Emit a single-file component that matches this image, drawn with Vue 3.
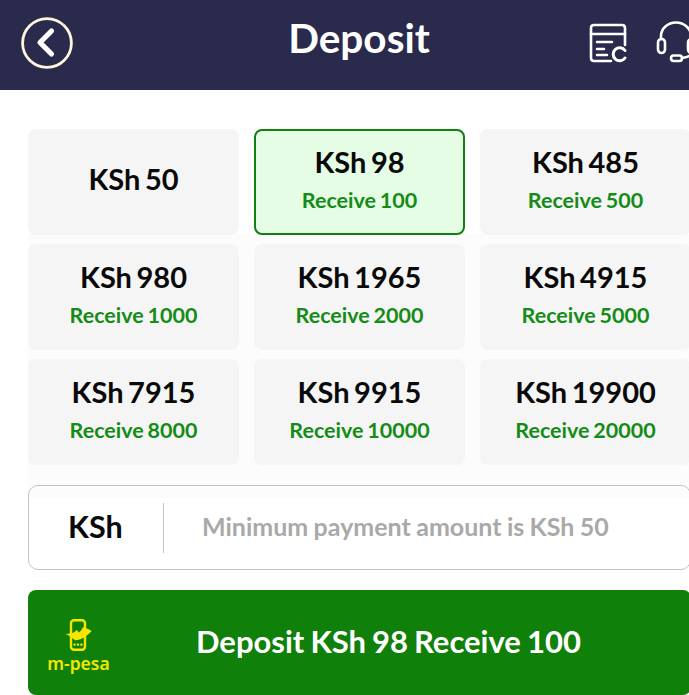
<script setup>
const options = [
  { pay: 50 },
  { pay: 98, receive: 100, active: true },
  { pay: 485, receive: 500 },
  { pay: 980, receive: 1000 },
  { pay: 1965, receive: 2000 },
  { pay: 4915, receive: 5000 },
  { pay: 7915, receive: 8000 },
  { pay: 9915, receive: 10000 },
  { pay: 19900, receive: 20000 },
]
</script>

<template>
  <div class="page">
    <header class="header">
      <svg class="back" width="52" height="52" viewBox="0 0 52 52" fill="none">
        <circle cx="26" cy="26" r="24.4" stroke="#fdf6dc" stroke-width="2.8" />
        <path d="M30.5 14 L19 25.5 L30.5 37" stroke="#fff" stroke-width="5.2" stroke-linecap="round" stroke-linejoin="round" />
      </svg>
      <h1 class="title">Deposit</h1>
      <div class="actions">
        <svg width="40" height="40" viewBox="0 0 40 40" fill="none" stroke="#fff" stroke-width="2.6" stroke-linecap="round" stroke-linejoin="round">
          <path d="M22 38 H5 Q2 38 2 35 V5 Q2 2 5 2 H33 Q36 2 36 5 V22" />
          <path d="M2 11 H36" />
          <path d="M8 19 H23 M8 26 H15 M8 32 H18" />
          <path d="M36 27.5 A6.5 6.5 0 1 0 36 35" stroke-width="3" />
        </svg>
        <svg width="40" height="44" viewBox="0 0 40 44" fill="none" stroke="#fff" stroke-width="2.6" stroke-linecap="round" stroke-linejoin="round">
          <path d="M5 18 V15 A15 13.5 0 0 1 35 15 V18" />
          <rect x="2" y="18" width="7" height="14" rx="3.5" />
          <rect x="32" y="18" width="7" height="14" rx="3.5" />
          <path d="M35 32 Q35 36 26 37" />
          <rect x="15" y="34.5" width="11" height="5.5" rx="2.7" />
        </svg>
      </div>
    </header>

    <main class="content">
      <section class="grid">
        <button v-for="o in options" :key="o.pay" class="card" :class="{ active: o.active }">
          <span class="pay">KSh {{ o.pay }}</span>
          <span v-if="o.receive" class="receive">Receive {{ o.receive }}</span>
        </button>
      </section>

      <div class="amount">
        <span class="currency">KSh</span>
        <span class="hint">Minimum payment amount is KSh 50</span>
      </div>

      <button class="submit">
        <span class="mpesa">
          <svg width="30" height="33" viewBox="0 0 30 33" fill="none">
            <rect x="8" y="1.2" width="14" height="29.6" rx="3" stroke="#f4e600" stroke-width="2.4" />
            <path d="M2 15 C7 15 11 14 13.7 11 L16 13.5 C18 12 19 10 20 8 C23 9 26 10 28.7 12 C24 17 19 21 12 21.3 C9 19 6 16 2 15 Z" fill="#f4e600" />
            <rect x="10.5" y="24.5" width="2.2" height="2.2" fill="#f4e600" />
            <rect x="13.9" y="24.5" width="2.2" height="2.2" fill="#f4e600" />
            <rect x="17.3" y="24.5" width="2.2" height="2.2" fill="#f4e600" />
          </svg>
          <span class="mpesa-text">m-pesa</span>
        </span>
        <span class="submit-text">Deposit KSh 98 Receive 100</span>
      </button>
    </main>
  </div>
</template>

<style>
html, body { margin: 0; background: #fff; overflow: hidden; }
</style>

<style scoped>
.page {
  width: 689px;
  height: 695px;
  overflow: hidden;
  font-family: Lato, "Liberation Sans", sans-serif;
  background: #fff;
}
.header {
  height: 90px;
  width: 720px;
  box-sizing: border-box;
  background: #2a2a4c;
  display: flex;
  align-items: center;
  position: relative;
  padding-left: 21px;
}
.back { margin-top: -5px; }
.title {
  position: absolute;
  left: 0;
  width: 718px;
  text-align: center;
  margin: -13px 0 0;
  color: #fff;
  font-size: 40.5px;
  font-weight: 700;
  line-height: 1;
}
.actions {
  position: absolute;
  left: 589px;
  top: 21px;
  display: flex;
  gap: 27px;
  align-items: center;
}
.content {
  width: 663px;
  margin-left: 28px;
  padding-top: 39px;
  position: relative;
}
.content::before {
  content: "";
  position: absolute;
  left: 0;
  right: 0;
  top: 144px;
  height: 264px;
  background: #fcfcfc;
}
.grid {
  position: relative;
  display: grid;
  grid-template-columns: repeat(3, 211px);
  grid-auto-rows: 105.5px;
  column-gap: 15px;
  row-gap: 9.5px;
}
.card {
  appearance: none;
  border: 0;
  padding: 0 0 5px;
  margin: 0;
  font-family: inherit;
  background: #f5f5f5;
  border-radius: 8px;
  display: flex;
  flex-direction: column;
  align-items: center;
  justify-content: center;
  gap: 10px;
}
.card.active {
  background: #e5fde5;
  border: 2.5px solid #118011;
  box-sizing: border-box;
}
.pay {
  font-size: 29px;
  font-weight: 700;
  line-height: 32px;
  word-spacing: -2.5px;
  color: #0a0a0a;
}
.receive {
  font-size: 21.5px;
  font-weight: 700;
  line-height: 24px;
  word-spacing: -1.5px;
  color: #158c17;
}
.amount {
  position: relative;
  margin-top: 20.5px;
  height: 85px;
  box-sizing: border-box;
  border: 1px solid #c4c4c4;
  border-radius: 10px;
  display: flex;
  align-items: center;
}
.currency {
  width: 135px;
  box-sizing: border-box;
  height: 50px;
  line-height: 46px;
  padding-left: 39px;
  border-right: 1px solid #c4c4c4;
  font-size: 30.5px;
  font-weight: 700;
  color: #0a0a0a;
}
.hint {
  margin-left: 38px;
  font-size: 25px;
  font-weight: 700;
  word-spacing: -0.7px;
  color: #a9a9a9;
  margin-top: -3px;
}
.submit {
  appearance: none;
  border: 0;
  margin: 20px 0 0;
  padding: 0;
  width: 100%;
  height: 105px;
  border-radius: 8px;
  background: #0f800a;
  display: flex;
  align-items: center;
  position: relative;
  font-family: inherit;
}
.mpesa {
  width: 100px;
  display: flex;
  flex-direction: column;
  align-items: center;
  margin-top: 6px;
}
.mpesa-text {
  font-family: "Noto Sans", sans-serif;
  font-size: 17.5px;
  line-height: 17px;
  font-weight: 600;
  color: #f4e600;
  margin-top: 3px;
  margin-left: 1px;
}
.submit-text {
  margin-left: 68px;
  margin-top: -4px;
  font-size: 31px;
  font-weight: 700;
  word-spacing: -1.5px;
  color: #fff;
}
</style>
